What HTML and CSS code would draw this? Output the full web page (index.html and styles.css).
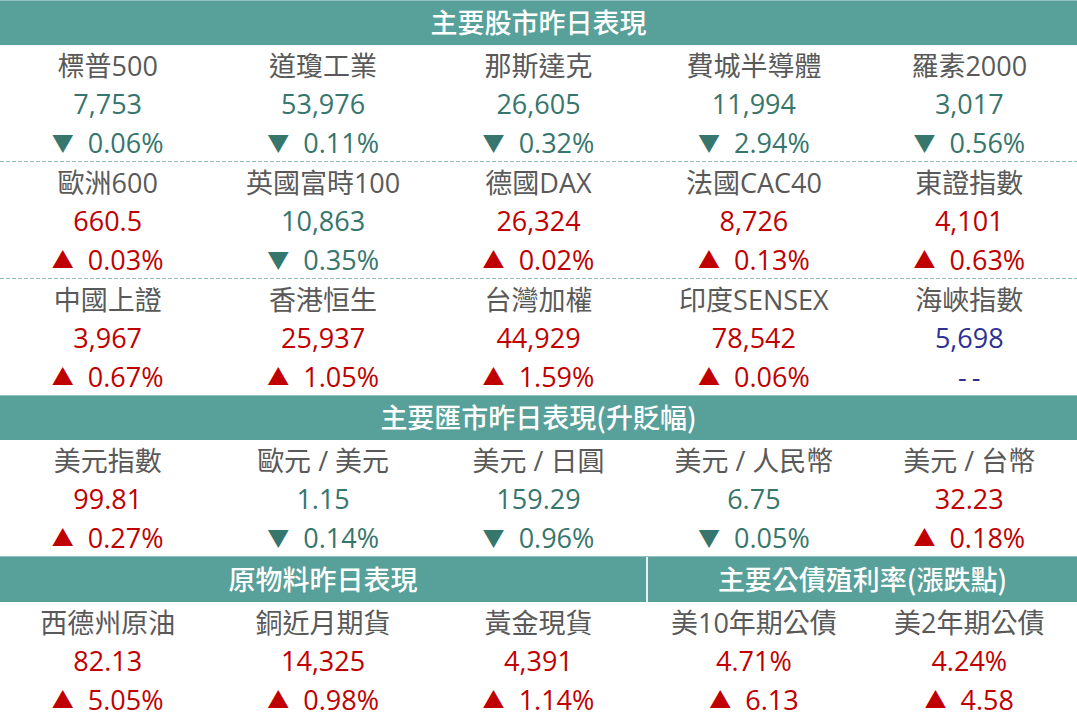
FILE: index.html
```html
<!DOCTYPE html>
<html lang="zh-Hant">
<head>
<meta charset="utf-8">
<title>主要市場昨日表現</title>
<link rel="stylesheet" href="styles.css">
</head>
<body>
<div class="board">
  <div class="head">主要股市昨日表現</div>
  <div class="row dashed">
    <div class="cell"><div class="name">標普500</div><div class="val dn">7,753</div><div class="chg dn"><span class="tri">▼</span>0.06%</div></div>
    <div class="cell"><div class="name">道瓊工業</div><div class="val dn">53,976</div><div class="chg dn"><span class="tri">▼</span>0.11%</div></div>
    <div class="cell"><div class="name">那斯達克</div><div class="val dn">26,605</div><div class="chg dn"><span class="tri">▼</span>0.32%</div></div>
    <div class="cell"><div class="name">費城半導體</div><div class="val dn">11,994</div><div class="chg dn"><span class="tri">▼</span>2.94%</div></div>
    <div class="cell"><div class="name">羅素2000</div><div class="val dn">3,017</div><div class="chg dn"><span class="tri">▼</span>0.56%</div></div>
  </div>
  <div class="row dashed">
    <div class="cell"><div class="name">歐洲600</div><div class="val up">660.5</div><div class="chg up"><span class="tri">▲</span>0.03%</div></div>
    <div class="cell"><div class="name">英國富時100</div><div class="val dn">10,863</div><div class="chg dn"><span class="tri">▼</span>0.35%</div></div>
    <div class="cell"><div class="name">德國DAX</div><div class="val up">26,324</div><div class="chg up"><span class="tri">▲</span>0.02%</div></div>
    <div class="cell"><div class="name">法國CAC40</div><div class="val up">8,726</div><div class="chg up"><span class="tri">▲</span>0.13%</div></div>
    <div class="cell"><div class="name">東證指數</div><div class="val up">4,101</div><div class="chg up"><span class="tri">▲</span>0.63%</div></div>
  </div>
  <div class="row">
    <div class="cell"><div class="name">中國上證</div><div class="val up">3,967</div><div class="chg up"><span class="tri">▲</span>0.67%</div></div>
    <div class="cell"><div class="name">香港恒生</div><div class="val up">25,937</div><div class="chg up"><span class="tri">▲</span>1.05%</div></div>
    <div class="cell"><div class="name">台灣加權</div><div class="val up">44,929</div><div class="chg up"><span class="tri">▲</span>1.59%</div></div>
    <div class="cell"><div class="name">印度SENSEX</div><div class="val up">78,542</div><div class="chg up"><span class="tri">▲</span>0.06%</div></div>
    <div class="cell"><div class="name">海峽指數</div><div class="val flat">5,698</div><div class="chg flat nil">--</div></div>
  </div>
  <div class="head">主要匯市昨日表現(升貶幅)</div>
  <div class="row">
    <div class="cell"><div class="name">美元指數</div><div class="val up">99.81</div><div class="chg up"><span class="tri">▲</span>0.27%</div></div>
    <div class="cell"><div class="name">歐元 / 美元</div><div class="val dn">1.15</div><div class="chg dn"><span class="tri">▼</span>0.14%</div></div>
    <div class="cell"><div class="name">美元 / 日圓</div><div class="val dn">159.29</div><div class="chg dn"><span class="tri">▼</span>0.96%</div></div>
    <div class="cell"><div class="name">美元 / 人民幣</div><div class="val dn">6.75</div><div class="chg dn"><span class="tri">▼</span>0.05%</div></div>
    <div class="cell"><div class="name">美元 / 台幣</div><div class="val up">32.23</div><div class="chg up"><span class="tri">▲</span>0.18%</div></div>
  </div>
  <div class="head split">
    <div class="part">原物料昨日表現</div>
    <div class="part sep">主要公債殖利率(漲跌點)</div>
  </div>
  <div class="row">
    <div class="cell"><div class="name">西德州原油</div><div class="val up">82.13</div><div class="chg up"><span class="tri">▲</span>5.05%</div></div>
    <div class="cell"><div class="name">銅近月期貨</div><div class="val up">14,325</div><div class="chg up"><span class="tri">▲</span>0.98%</div></div>
    <div class="cell"><div class="name">黃金現貨</div><div class="val up">4,391</div><div class="chg up"><span class="tri">▲</span>1.14%</div></div>
    <div class="cell"><div class="name">美10年期公債</div><div class="val up">4.71%</div><div class="chg up"><span class="tri">▲</span>6.13</div></div>
    <div class="cell"><div class="name">美2年期公債</div><div class="val up">4.24%</div><div class="chg up"><span class="tri">▲</span>4.58</div></div>
  </div>
</div>
</body>
</html>
```

FILE: styles.css
```css
* { box-sizing: border-box; }
html, body {
  margin: 0;
  padding: 0;
  background: #ffffff;
}
body {
  font-family: "Open Sans", "Noto Sans CJK TC", sans-serif;
  width: 1077px;
  height: 718px;
  overflow: hidden;
}
.board {
  display: flex;
  flex-direction: column;
  width: 1077px;
}
.head {
  height: 45px;
  background: #58a09a;
  color: #ffffff;
  font-family: "Noto Sans CJK TC", sans-serif;
  font-weight: 500;
  font-size: 27px;
  text-align: center;
  border-top: 1px solid #8fc3bf;
  line-height: 42px;
}
.head.split {
  display: grid;
  grid-template-columns: 646px 1fr;
  height: 46px;
  line-height: 43px;
}
.part.sep {
  border-left: 2px solid #e6f1f0;
}
.row {
  display: grid;
  grid-template-columns: repeat(5, 1fr);
  height: 116px;
}
.row.dashed {
  position: relative;
  height: 117px;
  padding-bottom: 1px;
}
.row.dashed::after {
  content: "";
  position: absolute;
  left: 0;
  right: 0;
  bottom: 0;
  height: 1px;
  background: repeating-linear-gradient(90deg, #8fbdbb 0 4px, transparent 4px 6px);
}
.cell {
  display: grid;
  grid-template-rows: repeat(3, 1fr);
  text-align: center;
  font-size: 27px;
  align-items: center;
}
.name {
  color: #595959;
}
.val, .chg { line-height: 1; }
.up { color: #c00000; }
.dn { color: #36766d; }
.flat { color: #2e3192; }
.nil { letter-spacing: 5px; padding-left: 5px; }
.tri {
  font-family: "Noto Sans CJK TC", sans-serif;
  font-size: 22px;
  margin-right: 14px;
  position: relative;
  top: -2px;
}
```
